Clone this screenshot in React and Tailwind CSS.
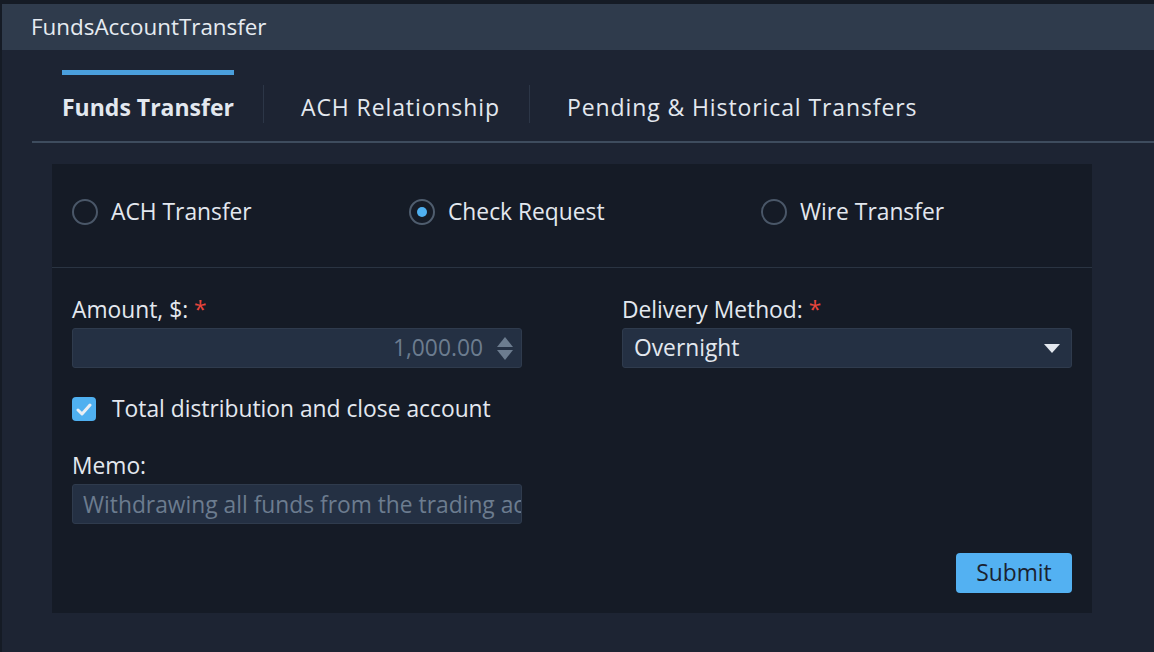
import { useState } from "react";

function Radio({ label, checked, onClick, className }) {
  return (
    <button onClick={onClick} className={`flex items-center gap-[13px] ${className}`}>
      <span
        className={`w-[26px] h-[26px] rounded-full border-2 flex items-center justify-center ${
          checked ? "border-[#4f5d6e]" : "border-[#4a5768]"
        }`}
      >
        {checked && <span className="w-[10px] h-[10px] rounded-full bg-[#4fb0f0]" />}
      </span>
      <span className="text-[22.8px] leading-[28px] text-[#e3e8ef]">{label}</span>
    </button>
  );
}

function App() {
  const [tab, setTab] = useState("Funds Transfer");
  const [method, setMethod] = useState("Check Request");
  const [closeAccount, setCloseAccount] = useState(true);

  const tabs = ["Funds Transfer", "ACH Relationship", "Pending & Historical Transfers"];

  return (
    <div
      className="w-[1154px] h-[652px] bg-[#151b25] pt-[4px] pl-[2px] overflow-hidden"
      style={{ fontFamily: '"Open Sans", "Noto Sans", sans-serif' }}
    >
      <div className="h-full flex flex-col bg-[#1d2433]">
        {/* Window title */}
        <div className="h-[46px] bg-[#2f3b4c] pl-[29px] flex items-center">
          <span className="text-[22.4px] text-[#e6ebf1]">FundsAccountTransfer</span>
        </div>

        <div className="pl-[30px]">
          {/* Tabs */}
          <div className="flex items-start pl-[30px] h-[93px] border-b-2 border-[#3e4c5e]">
            {tabs.map((t, i) => (
              <div key={t} className="flex items-start">
                {i > 0 && <div className="w-px h-[38px] mt-[35px] ml-[29px] mr-[37px] bg-[#2c3647]" />}
                <button onClick={() => setTab(t)} className="flex flex-col items-stretch">
                  <span className={`h-[5px] mt-[20px] ${tab === t ? "bg-[#4a9fdd]" : "bg-transparent"}`} />
                  <span
                    className={`mt-[17px] leading-[30px] text-[23px] text-[#e3e8ef] ${
                      tab === t ? "font-bold" : "tracking-[0.9px]"
                    }`}
                  >
                    {t}
                  </span>
                </button>
              </div>
            ))}
          </div>

          {/* Card */}
          <div className="ml-[20px] mt-[21px] w-[1040px] h-[449px] bg-[#151b26] flex flex-col">
            <div className="h-[104px] border-b border-[#2a3442] flex items-start pt-[34px] px-[20px]">
              <Radio
                label="ACH Transfer"
                checked={method === "ACH Transfer"}
                onClick={() => setMethod("ACH Transfer")}
                className="w-[337px]"
              />
              <Radio
                label="Check Request"
                checked={method === "Check Request"}
                onClick={() => setMethod("Check Request")}
                className="w-[352px]"
              />
              <Radio
                label="Wire Transfer"
                checked={method === "Wire Transfer"}
                onClick={() => setMethod("Wire Transfer")}
              />
            </div>

            <div className="flex-1 flex flex-col px-[20px] pt-[28px]">
              <div className="grid grid-cols-2 gap-x-[100px]">
                <div>
                  <div className="text-[22.8px] leading-[28px] text-[#e3e8ef] mb-[4px]">
                    Amount, $: <span className="text-[#e8453c]">*</span>
                  </div>
                  <div className="h-[40px] bg-[#243043] border border-[#2f3b4d] rounded-[3px] flex items-center justify-end pr-[8px]">
                    <span className="text-[22.8px] text-[#6c7c8f]">1,000.00</span>
                    <span className="ml-[14px] flex flex-col gap-[3px]">
                      <svg width="16" height="10" viewBox="0 0 16 10">
                        <path d="M8 0 L16 10 L0 10 Z" fill="#6c7c8f" />
                      </svg>
                      <svg width="16" height="10" viewBox="0 0 16 10">
                        <path d="M0 0 L16 0 L8 10 Z" fill="#6c7c8f" />
                      </svg>
                    </span>
                  </div>
                </div>
                <div>
                  <div className="text-[22.8px] leading-[28px] text-[#e3e8ef] mb-[4px]">
                    Delivery Method: <span className="text-[#e8453c]">*</span>
                  </div>
                  <div className="h-[40px] bg-[#243043] border border-[#2f3b4d] rounded-[3px] flex items-center justify-between pl-[11px] pr-[11px]">
                    <span className="text-[22.8px] text-[#e3e8ef]">Overnight</span>
                    <svg width="16" height="9" viewBox="0 0 16 9">
                      <path d="M0 0 L16 0 L8 9 Z" fill="#e3e8ef" />
                    </svg>
                  </div>
                </div>
              </div>

              <button
                onClick={() => setCloseAccount(!closeAccount)}
                className="mt-[27px] flex items-center gap-[16px] self-start"
              >
                <span
                  className={`w-[24px] h-[24px] rounded-[4px] flex items-center justify-center ${
                    closeAccount ? "bg-[#4fb0f0]" : "border-2 border-[#4a5768]"
                  }`}
                >
                  {closeAccount && (
                    <svg width="16" height="13" viewBox="0 0 16 13">
                      <path
                        d="M2 7 L6 11 L14 2"
                        fill="none"
                        stroke="#e9eef4"
                        strokeWidth="3"
                        strokeLinecap="round"
                        strokeLinejoin="round"
                      />
                    </svg>
                  )}
                </span>
                <span className="text-[22.8px] leading-[28px] text-[#e3e8ef]">
                  Total distribution and close account
                </span>
              </button>

              <div className="w-[450px] mt-[29px]">
                <div className="text-[22.8px] leading-[28px] text-[#e3e8ef] mb-[4px]">Memo:</div>
                <input
                  readOnly
                  placeholder="Withdrawing all funds from the trading account"
                  className="block w-full h-[40px] bg-[#243043] border border-[#2f3b4d] rounded-[3px] pl-[10px] text-[22.8px] outline-none placeholder:text-[#6c7c8f]"
                  style={{ fontFamily: "inherit" }}
                />
              </div>

              <div className="flex justify-end mt-[29px]">
                <button className="w-[116px] h-[40px] bg-[#53b1f2] rounded-[4px] text-[22.8px] text-[#1a2230]">
                  Submit
                </button>
              </div>
            </div>
          </div>
        </div>
      </div>
    </div>
  );
}

export default App;
